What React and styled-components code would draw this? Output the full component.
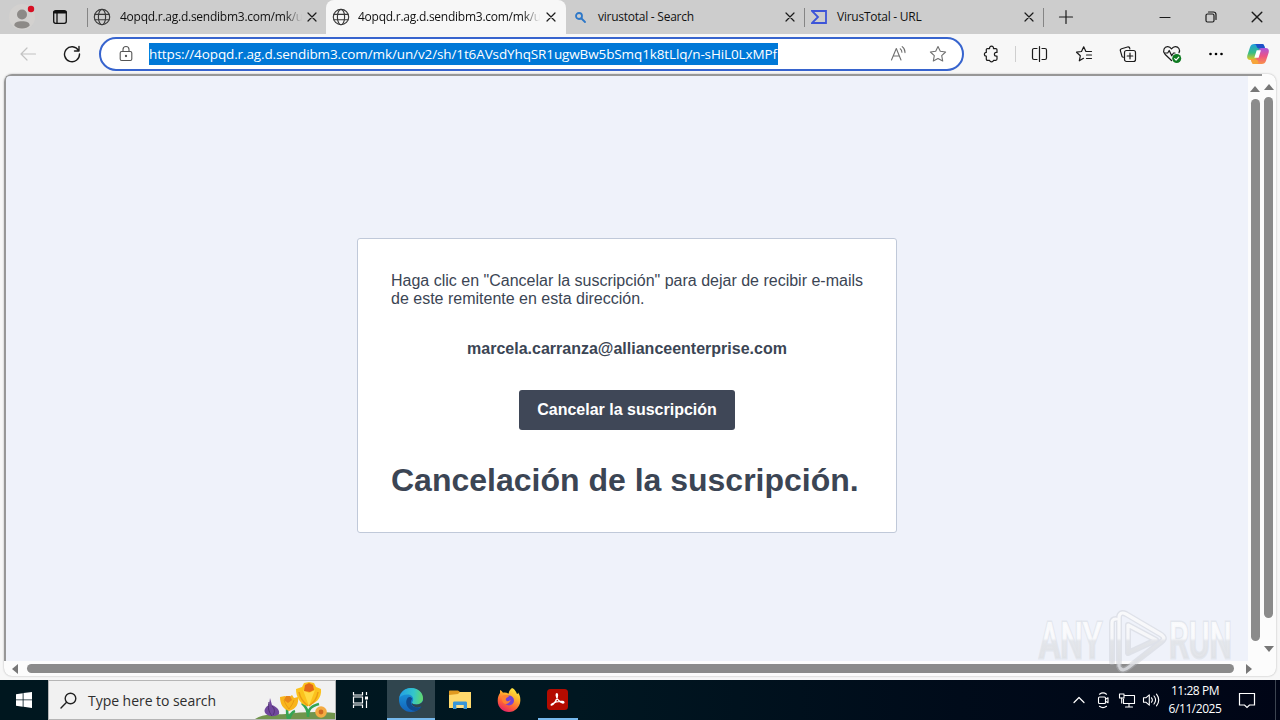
import React from 'react';
import styled, { createGlobalStyle } from 'styled-components';

const GlobalStyle = createGlobalStyle`
  * { box-sizing: border-box; }
  body {
    margin: 0;
    width: 1280px;
    height: 720px;
    overflow: hidden;
    font-family: 'Open Sans', 'Noto Sans', sans-serif;
  }
  svg { display: block; flex: none; }
`;

const Screen = styled.div`
  position: relative;
  display: flex;
  flex-direction: column;
  width: 1280px;
  height: 720px;
  overflow: hidden;
  background: #f7f7f7;
`;

/* tabs */
const TabStrip = styled.div`
  display: flex;
  height: 34px;
  background: #cdcdcd;
`;
const Slot = styled.div`
  display: flex;
  flex: none;
  align-items: center;
  justify-content: center;
  width: ${(p) => p.$w}px;
  height: 100%;
`;
const TabLine = styled.div`
  flex: none;
  width: 1px;
  height: 19px;
  margin-top: 8px;
  background: #858585;
`;
const Tab = styled.div`
  display: flex;
  flex: none;
  align-items: center;
  width: ${(p) => p.$w}px;
  height: 34px;
  padding: 0 7px 0 ${(p) => p.$left || 6}px;
  border-radius: 8px 8px 0 0;
  background: ${(p) => (p.$active ? '#f7f7f7' : 'transparent')};
`;
const TabTitle = styled.span`
  flex: 1;
  margin-left: ${(p) => p.$gap || 8}px;
  white-space: nowrap;
  font-size: 12px;
  line-height: 18px;
  color: #111;
  letter-spacing: -0.25px;
  mask-image: ${(p) => (p.$fade ? 'linear-gradient(90deg, #000 165px, transparent 182px)' : 'none')};
`;
const Spacer = styled.div`
  flex: 1;
`;

/* toolbar */
const Toolbar = styled.div`
  display: flex;
  flex: none;
  align-items: center;
  height: 40px;
  padding-left: 6px;
`;
const AddressBar = styled.div`
  display: flex;
  flex: none;
  align-items: center;
  width: 865px;
  height: 34px;
  margin: 0 7px 0 5px;
  padding-left: 5px;
  border: 2px solid #3764ce;
  border-radius: 17px;
  background: #fff;
`;
const Url = styled.span`
  width: 629px;
  height: 22px;
  margin-left: 3px;
  white-space: nowrap;
  font-size: 13.5px;
  line-height: 22px;
  letter-spacing: -0.115px;
  color: #fff;
  background: #0078d7;
`;
const ToolLine = styled.div`
  width: 1px;
  height: 16px;
  margin: 0 2px 0 4px;
  background: #cfcfcf;
`;

/* page */
const Frame = styled.div`
  display: grid;
  flex: none;
  grid-template-columns: 1244px 14px 14px;
  grid-template-rows: 587px 15px;
  width: 1272px;
  height: 602px;
  margin: 0 0 4px 4px;
  border-radius: 8px;
  overflow: hidden;
  background: #fcfcfc;
  box-shadow: 0 0 2px rgba(0, 0, 0, 0.3);
`;
const Viewport = styled.main`
  display: flex;
  justify-content: center;
  padding-top: 162px;
  border-top: 2px solid #979797;
  border-left: 2px solid #979797;
  border-top-left-radius: 6px;
  background: #eff2fa;
`;
const Card = styled.section`
  display: flex;
  flex-direction: column;
  align-items: center;
  width: 540px;
  height: 295px;
  padding: 33px 32px 0;
  border: 1px solid #c0c9d9;
  border-radius: 3px;
  background: #fff;
  color: #3b4554;
  font-family: 'Liberation Sans', Arial, sans-serif;
  font-size: 16px;
  line-height: 18px;
`;
const Message = styled.p`
  width: 100%;
  margin: 0 0 32px;
  padding-left: 1px;
  white-space: nowrap;
`;
const Email = styled.strong`
  margin-bottom: 32px;
`;
const CancelButton = styled.button`
  width: 216px;
  height: 40px;
  padding: 0;
  border: 0;
  border-radius: 3px;
  background: #3f4757;
  color: #fff;
  font: bold 16px 'Liberation Sans', Arial, sans-serif;
`;
const Heading = styled.h1`
  width: 100%;
  margin: 32px 0 0;
  padding-left: 1px;
  white-space: nowrap;
  font-size: 32px;
  line-height: 36px;
`;
const VTrack = styled.div`
  display: flex;
  flex-direction: column;
  align-items: center;
  padding-top: 10px;
  padding-right: ${(p) => p.$right || 0}px;
  border-top: ${(p) => (p.$lined ? '2px solid #979797' : '0')};
`;
const Thumb = styled.div`
  flex: none;
  width: ${(p) => p.$w}px;
  height: ${(p) => p.$h}px;
  margin: ${(p) => p.$m || '0'};
  border-radius: 5px;
  background: #8b8b8b;
`;
const HTrack = styled.div`
  display: flex;
  grid-column: 1 / -1;
  align-items: center;
  padding-left: 8px;
`;

/* taskbar */
const Taskbar = styled.div`
  display: flex;
  flex: none;
  height: 40px;
  background: linear-gradient(90deg, #00171f 0%, #001721 45%, #000b1a 75%, #000516 100%);
  color: #fff;
`;
const SearchBox = styled.div`
  display: flex;
  align-items: center;
  width: 288px;
  height: 40px;
  padding-left: 11px;
  border: 1px solid #b5b5b5;
  background: #f1f1f1;
  overflow: hidden;
`;
const SearchText = styled.span`
  flex: 1;
  margin: 2px 0 0 11px;
  font-size: 14px;
  line-height: 20px;
  white-space: nowrap;
  color: #2e2e2e;
  letter-spacing: -0.04px;
`;
const AppButton = styled.div`
  display: flex;
  justify-content: center;
  align-items: center;
  width: ${(p) => p.$w}px;
  height: 40px;
  background: ${(p) => (p.$active ? '#30454e' : 'transparent')};
  box-shadow: ${(p) => (p.$active ? 'inset 0 -2px #76b9ed' : 'none')};
`;
const RunningApp = styled.div`
  display: flex;
  justify-content: center;
  align-items: center;
  width: 40px;
  height: 40px;
  margin-left: 4px;
  border-bottom: 2px solid #76b9ed;
  padding: 1px 1px 0 0;
`;
const Clock = styled.div`
  width: 64px;
  padding-top: 2px;
  text-align: center;
  white-space: nowrap;
  font-size: 12px;
  line-height: 18px;
  letter-spacing: -0.45px;
`;
const DesktopEdge = styled.div`
  width: 1px;
  margin: 0 4px 0 8px;
  background: #3c4450;
`;
const Watermark = styled.svg`
  position: absolute;
  left: 1030px;
  top: 600px;
`;

const Icon = ({ s = 20, color = '#1b1b1b', sw = 1.2, vb, children }) => (
  <svg
    width={s}
    height={s}
    viewBox={vb || `0 0 ${s} ${s}`}
    fill="none"
    stroke={color}
    strokeWidth={sw}
    strokeLinecap="round"
    strokeLinejoin="round"
  >
    {children}
  </svg>
);

const Close = ({ s = 10 }) => (
  <Icon s={s} vb="0 0 10 10" sw={1.2}><path d="M1 1l8 8M9 1l-8 8" /></Icon>
);

const Globe = () => (
  <Icon s={18} color="#3a3a3a" sw={1.15}>
    <circle cx="9" cy="9" r="7.7" />
    <ellipse cx="9" cy="9" rx="3.6" ry="7.7" />
    <path d="M1.9 6.3h14.2M1.9 11.7h14.2" />
  </Icon>
);

const Avatar = () => (
  <svg width="28" height="28">
    <circle cx="14" cy="14" r="13" fill="#d3d1cf" />
    <circle cx="14" cy="11.500" r="5" fill="#8d8a87" />
    <path d="M6.300 22.500c0-3 3-4.200 7.700-4.200s7.700 1.200 7.700 4.200c-1.500 2-4.500 3-7.700 3s-6.200-1-7.700-3z" fill="#8d8a87" />
    <circle cx="23" cy="6" r="3.200" fill="#d70f23" />
  </svg>
);

const Workspaces = () => (
  <Icon s={16} color="#111" sw={1.3}>
    <rect x="1.700" y="1.700" width="12.600" height="12.600" rx="2" />
    <path d="M2.500 3.300h11" strokeWidth="2.600" />
    <path d="M5 4.500v9.500" />
  </Icon>
);

const Lock = () => (
  <Icon s={18} color="#555" sw={1.1}>
    <rect x="3.200" y="6.500" width="11.600" height="9" rx="1.500" />
    <path d="M6 6.300V4.500a3 3 0 0 1 6 0v1.800" />
    <circle cx="9" cy="11" r=".6" fill="#555" />
  </Icon>
);

const ReadAloud = () => (
  <Icon s={18} color="#707070" sw={1.1}>
    <path d="M2.500 15L7.300 3.500l4.700 11.500M4.200 11h6.200" />
    <path d="M11.200 3.800c1.200.8 1.700 2 1.700 3.500M13.200 1.600c2 1.500 2.900 3.500 2.800 6" />
  </Icon>
);

const Star = () => (
  <Icon s={18} color="#707070" sw={1.1}>
    <path d="M9 1.500l2.300 4.800 5.300.7-3.900 3.700 1 5.300L9 13.500 4.300 16l1-5.300L1.400 7l5.300-.7z" />
  </Icon>
);

const Puzzle = () => (
  <Icon s={18}>
    <path d="M5.500 3.600h2.100a2 2 0 1 1 3.900 0h2.300c.7 0 1.200.5 1.200 1.200v2.600h-.700a1.900 1.900 0 0 0 0 3.800h.7v2.900c0 .7-.5 1.200-1.200 1.200h-2.300a2 2 0 0 1-3.900 0H5.500c-.7 0-1.200-.5-1.200-1.200v-2.900a1.900 1.900 0 0 1 0-3.800V4.800c0-.7.5-1.200 1.200-1.200z" />
  </Icon>
);

const Split = () => (
  <Icon s={18}>
    <path d="M8.500 1.500v15M6 3.500H3.100c-.9 0-1.600.6-1.600 1.500v8c0 .9.700 1.500 1.600 1.500H6M11 3.500h2.900c.9 0 1.600.6 1.600 1.500v8c0 .9-.7 1.500-1.600 1.500H11" />
  </Icon>
);

const Favorites = () => (
  <Icon s={18}>
    <path d="M8.500 13.300L4.300 15.800l1-5L1.500 7.200l5-.7 2.200-4.700 2.200 4.700h5.600M11.500 10h5M11.500 13.500h5" />
  </Icon>
);

const Collections = () => (
  <Icon s={18}>
    <path d="M4.300 12.300l-1.200-.6-1.700-5.800c-.3-1 .2-1.900 1.200-2.200L8.500 2c1-.3 2 .2 2.200 1.200l.2.800" />
    <rect x="5.500" y="5.500" width="11" height="11" rx="2" />
    <path d="M11 8.200v5.600M8.200 11h5.600" />
  </Icon>
);

const Essentials = () => (
  <Icon s={20}>
    <path d="M9.500 16.500L3 10.200C0 6.500 2.500 2.500 5.800 2.700c1.700.1 2.800 1 3.700 2.200 1-1.200 2.100-2.100 3.800-2.200 3.200-.1 5.200 3 3.700 6" />
    <path d="M2.500 9h3.200l1.500-2.500 2.500 5.300L11.500 9H13" />
    <circle cx="14.700" cy="14.500" r="4.500" fill="#0f7b22" stroke="none" />
    <path d="M12.700 14.700l1.400 1.400 2.700-3" stroke="#fff" />
  </Icon>
);

const Copilot = () => (
  <svg width="24" height="24" viewBox="0 0 24 24">
    <defs>
      <linearGradient id="cpa" x1="0" y1="0" x2="0" y2="1">
        <stop offset="0" stopColor="#20a0df" />
        <stop offset=".55" stopColor="#37bd85" />
        <stop offset="1" stopColor="#e7c91e" />
      </linearGradient>
      <linearGradient id="cpb" x1="0" y1="0" x2="0" y2="1">
        <stop offset="0" stopColor="#a956dc" />
        <stop offset=".5" stopColor="#ed5285" />
        <stop offset="1" stopColor="#f9924a" />
      </linearGradient>
    </defs>
    <path d="M8.300 2h7.900c1.200 0 1.700.8 2.100 2l.8 2.600h-3c-1.700 0-2.400 1-2.900 2.500l-2 6.400c-.5 1.700-1.300 2.500-2.900 2.500H4.600c-2.900 0-4-2-3.300-4.500L4 5.300C4.800 3 6 2 8.300 2z" fill="url(#cpa)" />
    <path d="M8.300 2h7.900c1.200 0 1.700.8 2.100 2l.8 2.600h-5.400c-1.800 0-2.500-.4-3-2C10.200 3 9.700 2 8.300 2z" fill="#1e50c8" />
    <path d="M15.700 22H7.800c-1.200 0-1.700-.8-2.100-2L4.900 17.500h3c1.700 0 2.400-1 2.900-2.500l2-6.400c.5-1.700 1.300-2.500 2.900-2.500h3.700c2.900 0 4 2 3.300 4.500L20 18.700c-.8 2.300-2 3.300-4.300 3.300z" fill="url(#cpb)" />
    <path d="M5.700 20l-.8-2.500h5.400c1 0 1.700 1 2 2 .3 1.300.2 2.500-1.300 2.500H7.800c-1.200 0-1.700-.8-2.100-2z" fill="#f6a53a" />
    <path d="M10.700 8.200h4.200l-2.300 7.600H8.300z" fill="#fff" />
  </svg>
);

const Arrow = ({ d, w = 10, h = 6 }) => (
  <svg width={w} height={h} viewBox={`0 0 ${w} ${h}`}><path d={d} fill="#777" /></svg>
);

const Flowers = () => (
  <svg width="80" height="38" viewBox="0 0 80 38">
    <path d="M0 38c10-6 20-4 31-5 13-2 33-3 49-1v6z" fill="#71954d" />
    <path d="M33 38c-1-5-1-8-1-11M34 38c2-5 3-7 6-8M53 36c0-7-2-10-6-14M53 36c0-8 3-11 11-13" fill="none" stroke="#35a554" strokeWidth="2.600" />
    <path d="M15 17l2 7c5 2 8 5 7 9-4 3-9 3-13 0-3-3-1-7 3-9z" fill="#70479c" />
    <path d="M14 21c-1 5-1 9 3 14M17 25c3 3 3 6 1 9" fill="none" stroke="#503074" />
    <path d="M25 16l5-1 3 2 4-3 2 3 4-1c1 7-2 12-9 14-6-2-9-7-9-14z" fill="#f9b51c" />
    <path d="M31 15l4 0 2 4-4 3-4-3z" fill="#e8861a" />
    <path d="M29 19c1 4 3 6 5 9M39 19c-1 4-3 6-5 9" fill="none" stroke="#e99a14" />
    <path d="M41 8l6-2 2-4 5-1 5 1 2 4 5 2c1 9-5 15-14 17-7-2-11-9-11-17z" fill="#fbc21d" />
    <path d="M48 9l6 3 6-3-6 16z" fill="#ffda45" />
    <path d="M44 11c1 6 4 10 9 14M63 11c-1 7-4 10-9 14" fill="none" stroke="#ed9b13" strokeWidth="1.500" />
    <path d="M50 4l4-2 4 2 1 5-4 2-6-1z" fill="#e36817" />
    <circle cx="66" cy="31" r="5.800" fill="#f4ab42" />
    <circle cx="66" cy="31" r="2.400" fill="#cf6920" />
  </svg>
);

const Edge = () => (
  <svg width="26" height="26" viewBox="0 0 26 26">
    <defs>
      <linearGradient id="eda" x1="0" y1=".4" x2="1" y2=".5">
        <stop offset="0" stopColor="#229fe6" />
        <stop offset=".6" stopColor="#34c6ca" />
        <stop offset="1" stopColor="#62d86b" />
      </linearGradient>
      <linearGradient id="edb" x1="0" y1="0" x2="0" y2="1">
        <stop offset="0" stopColor="#1c9fe0" />
        <stop offset="1" stopColor="#1362b9" />
      </linearGradient>
    </defs>
    <circle cx="13" cy="13" r="12" fill="url(#edb)" />
    <path d="M1.200 11C2.500 5 7 1 13 1c7 0 12 4.500 12 10.200 0 4-3 6.300-6.700 6.300-3 0-4.300-1-4.300-2 0-.8 1.200-1.200 1.200-3.300 0-2.700-2.500-4.700-5.700-4.700C5.500 7.500 2.500 9 1.200 11z" fill="url(#eda)" />
    <path d="M9.500 11c-3.500 5 .5 13.200 8 12.900 2.500-.2 5-2 6.200-4.200-4 2-9.700.6-10.700-3.500-.5-2 .5-3 1.200-4.500-1-2-3.400-2-4.700-.7z" fill="#114a8c" />
    <path d="M14 15.500c0 1 1.300 2 4.300 2 3 0 5.500-1.300 6.500-3.500L26 20l-2.500-.4c-4 1.800-8.500.4-9.800-2.600z" fill="#30454e" />
  </svg>
);

const Folder = () => (
  <svg width="22" height="20" viewBox="0 0 22 20">
    <path d="M0 1.500C0 .7.500.5 1 .5h8l2 1.500h10c.6 0 1 .4 1 1V7H0z" fill="#e09a20" />
    <path d="M0 5l9-1 2-2h11v16H0z" fill="#ffd96c" />
    <path d="M4 19v-6c0-1 .5-1.500 1.500-1.500h11c1 0 1.500.5 1.500 1.500v6h-3.500v-4h-7v4z" fill="#3896d9" />
    <path d="M7.500 15h7v3h-7z" fill="#ffe08a" />
  </svg>
);

const Firefox = () => (
  <svg width="24" height="26" viewBox="0 0 24 26">
    <defs>
      <linearGradient id="ff" x1=".8" y1="0" x2=".3" y2="1">
        <stop offset="0" stopColor="#fff044" />
        <stop offset=".35" stopColor="#ffb52c" />
        <stop offset=".7" stopColor="#ff6136" />
        <stop offset="1" stopColor="#e4206a" />
      </linearGradient>
    </defs>
    <path d="M15 1c3 1 4 4 5 6 1-.2 1-.8 1-1.500 2 3 2.500 5 2.300 8.500C23 20 18 25 12 25S.7 20.500.7 14c0-4 1-6 2.300-8V3c1.500.5 2 1.500 3 2.700 2-.4 4 0 5.500 1C12 4 13 2.500 15 1z" fill="url(#ff)" />
    <circle cx="12" cy="13.500" r="5" fill="#7542d4" />
    <path d="M5 9c2-1 4-1.500 7 .2-1 1.300-3 1.300-3.300 3 .9 3.300 3.300 1.800 5 .5-1 3-3.500 5-6 4-2-.5-3.500-4-2.700-7.700z" fill="#ff8230" />
  </svg>
);

const Acrobat = () => (
  <svg width="21" height="21" viewBox="0 0 21 21">
    <rect width="21" height="21" rx="3.500" fill="#b30b00" />
    <path d="M4.500 16c2-.5 6-5 6-9.500 0-2.500-1.500-2.200-1.300 0C9.500 10 13 13.500 16 14c1.500 0 1-1.500-.5-1.600-3-.2-7.500.6-10.300 2.300-1.200.8-1.300 1.400-.7 1.300z" fill="none" stroke="#fff" strokeWidth="1.300" />
  </svg>
);

const trayIcons = [
  <Icon s={16} color="#fff" key="up"><path d="M3 10.500l5-5 5 5" /></Icon>,
  <Icon s={18} color="#fff" sw={1.1} key="meet">
    <rect x="4.500" y="6" width="7" height="6.500" rx="1" />
    <path d="M11.500 8.300l2.500-1.500v5l-2.500-1.500M5.500 3.200c2.300-1.700 4.700-1.700 7 0M5.500 15.300c2.300 1.700 4.700 1.700 7 0" />
  </Icon>,
  <Icon s={18} color="#fff" sw={1.1} key="net">
    <path d="M6.500 4.500H16.500v8H5.500V8M11 12.500V16M7.500 16h7" />
    <rect x="1.500" y="3" width="4.500" height="4" />
    <path d="M3.700 7v5" />
  </Icon>,
  <Icon s={18} color="#fff" sw={1.1} key="vol">
    <path d="M1.500 6.800h2.300l3.500-3v10.400l-3.500-3H1.500zM9.500 6.800c1 1.300 1 3.100 0 4.400M12 5c1.900 2.400 1.900 5.600 0 8M14.500 3.200c2.700 3.500 2.700 8.100 0 11.600" />
  </Icon>,
];

const playMark = 'M89 66V18c0-5 3-6 7-4l34 20c5 3 5 5 1 8L99 67c-4 3-7 4-9 1M98 53V25l28 15zM82 62V23c0-3 1-4 4-4';

const App = () => (
  <>
    <GlobalStyle />
    <Screen>
      <TabStrip>
        <Slot $w={44}><Avatar /></Slot>
        <Slot $w={32}><Workspaces /></Slot>
        <Slot $w={11} />
        <TabLine />
        <Tab $w={238} $left={5}>
          <Globe />
          <TabTitle $fade $gap={9}>4opqd.r.ag.d.sendibm3.com/mk/u</TabTitle>
          <Slot $w={14}><Close /></Slot>
        </Tab>
        <Tab $w={240} $active>
          <Globe />
          <TabTitle $fade>4opqd.r.ag.d.sendibm3.com/mk/u</TabTitle>
          <Slot $w={17}><Close /></Slot>
        </Tab>
        <Tab $w={238} $left={5}>
          <Slot $w={18}>
            <Icon s={12} color="#2e78c8" sw={1.8}><circle cx="5" cy="5" r="3" /><path d="M7.500 7.500L11 11" /></Icon>
          </Slot>
          <TabTitle $gap={9}>virustotal - Search</TabTitle>
          <Slot $w={15}><Close /></Slot>
        </Tab>
        <TabLine />
        <Tab $w={238} $left={5}>
          <Slot $w={18}>
            <Icon s={16} color="#3d55d8" sw={1.8}><path d="M1 2h14v12H1l6-6z" strokeLinejoin="miter" /></Icon>
          </Slot>
          <TabTitle $gap={9}>VirusTotal - URL</TabTitle>
          <Slot $w={15}><Close /></Slot>
        </Tab>
        <TabLine />
        <Slot $w={43}><Icon s={16}><path d="M1.500 8h13M8 1.500v13" /></Icon></Slot>
        <Spacer />
        <Slot $w={46}><Icon s={12}><path d="M1 6.500h10" /></Icon></Slot>
        <Slot $w={46}>
          <Icon s={12}><rect x="1" y="3" width="8" height="8" rx="1.500" /><path d="M3.500 1h5A2.500 2.500 0 0 1 11 3.500v5" /></Icon>
        </Slot>
        <Slot $w={46}><Close s={12} /></Slot>
      </TabStrip>

      <Toolbar>
        <Slot $w={44}><Icon s={18} color="#c2c2c2"><path d="M16.500 9H2M8 3L2 9l6 6" /></Icon></Slot>
        <Slot $w={44}><Icon s={18} sw={1.4}><path d="M15.500 5.500A7.500 7.500 0 1 0 16.500 9M16 1.500v4.500h-4.500" /></Icon></Slot>
        <AddressBar>
          <Slot $w={40}><Lock /></Slot>
          <Url>https://4opqd.r.ag.d.sendibm3.com/mk/un/v2/sh/1t6AVsdYhqSR1ugwBw5bSmq1k8tLlq/n-sHiL0LxMPf</Url>
          <Spacer />
          <Slot $w={40}><ReadAloud /></Slot>
          <Slot $w={40}><Star /></Slot>
          <Slot $w={4} />
        </AddressBar>
        <Slot $w={40}><Puzzle /></Slot>
        <ToolLine />
        <Slot $w={44}><Split /></Slot>
        <Slot $w={44}><Favorites /></Slot>
        <Slot $w={44}><Collections /></Slot>
        <Slot $w={44}><Essentials /></Slot>
        <Slot $w={44}>
          <svg width="16" height="4"><circle cx="2.500" cy="2" r="1.300" /><circle cx="8" cy="2" r="1.300" /><circle cx="13.500" cy="2" r="1.300" /></svg>
        </Slot>
        <Slot $w={40}><Copilot /></Slot>
      </Toolbar>

      <Frame>
        <Viewport>
          <Card>
            <Message>
              Haga clic en "Cancelar la suscripción" para dejar de recibir e-mails<br />
              de este remitente en esta dirección.
            </Message>
            <Email>marcela.carranza@allianceenterprise.com</Email>
            <CancelButton>Cancelar la suscripción</CancelButton>
            <Heading>Cancelación de la suscripción.</Heading>
          </Card>
        </Viewport>
        <VTrack $lined>
          <Arrow d="M5 0l5 6H0z" />
          <Thumb $w={9} $h={542} $m="7px 0 0" />
        </VTrack>
        <VTrack $right={1}>
          <Arrow d="M5 0l5 6H0z" />
          <Thumb $w={9} $h={521} $m="7px 0 28px" />
          <Arrow d="M5 6l5-6H0z" />
        </VTrack>
        <HTrack>
          <Arrow w={6} h={10} d="M0 5l6-5v10z" />
          <Thumb $w={1207} $h={9} $m="0 12px 0 9px" />
          <Arrow w={6} h={10} d="M6 5L0 0v10z" />
        </HTrack>
      </Frame>

      <Taskbar>
        <Slot $w={48}>
          <svg width="16" height="16" viewBox="0 0 16 16" fill="#fff">
            <path d="M0 2.200l6.700-1v6.300H0zM7.500 1.100L16 0v7.500H7.500zM0 8.300h6.700v6.400L0 13.800zM7.500 8.300H16V16l-8.500-1.200z" />
          </svg>
        </Slot>
        <SearchBox>
          <Icon s={17} color="#222" sw={1.4}><circle cx="10.500" cy="6.500" r="5.300" /><path d="M6.600 10.300L1 16" /></Icon>
          <SearchText>Type here to search</SearchText>
          <Flowers />
        </SearchBox>
        <Slot $w={48}>
          <svg width="17" height="16" fill="none" stroke="#fff" strokeWidth="1.200">
            <path d="M1.500 0v3h9V0M1.500 16v-3h9v3M1.500 5h9v6h-9zM14.500 0v3M14.500 8.500V16" />
            <path d="M13 4.500h3v3h-3z" fill="#fff" stroke="none" />
          </svg>
        </Slot>
        <Slot $w={3} />
        <AppButton $w={48} $active><Edge /></AppButton>
        <AppButton $w={49}><Folder /></AppButton>
        <AppButton $w={50}><Firefox /></AppButton>
        <RunningApp><Acrobat /></RunningApp>
        <Spacer />
        {trayIcons.map((icon) => <Slot $w={24} key={icon.key}>{icon}</Slot>)}
        <Clock>11:28 PM<br />6/11/2025</Clock>
        <Slot $w={40}>
          <Icon s={18} color="#fff"><path d="M1.500 2.500h15v11.500h-5L9 16.500l-2.500-2.500h-5z" strokeLinejoin="miter" /></Icon>
        </Slot>
        <DesktopEdge />
      </Taskbar>

      <Watermark width="220" height="80" fontFamily="Roboto, sans-serif" fontSize="50">
        <defs>
          <linearGradient id="wm" gradientUnits="userSpaceOnUse" x1="0" y1="14" x2="0" y2="68">
            <stop offset="0" stopColor="#fff" />
            <stop offset=".45" stopColor="#fcfcfd" />
            <stop offset=".5" stopColor="#e3e5e9" />
            <stop offset="1" stopColor="#dcdee2" />
          </linearGradient>
        </defs>
        <g fill="url(#wm)" fillOpacity=".8" stroke="#c4c8cf" strokeOpacity=".3" strokeWidth="3" paintOrder="stroke" fontWeight="500">
          <text x="9" y="58" textLength="63" lengthAdjust="spacingAndGlyphs">ANY</text>
          <text x="139" y="58" textLength="63" lengthAdjust="spacingAndGlyphs">RUN</text>
        </g>
        <g fill="none" strokeLinejoin="round" strokeLinecap="round">
          <path d={playMark} stroke="#bfc2c8" strokeOpacity=".35" strokeWidth="6" />
          <path d={playMark} stroke="url(#wm)" strokeOpacity=".8" strokeWidth="3.200" />
        </g>
      </Watermark>
    </Screen>
  </>
);

export default App;
